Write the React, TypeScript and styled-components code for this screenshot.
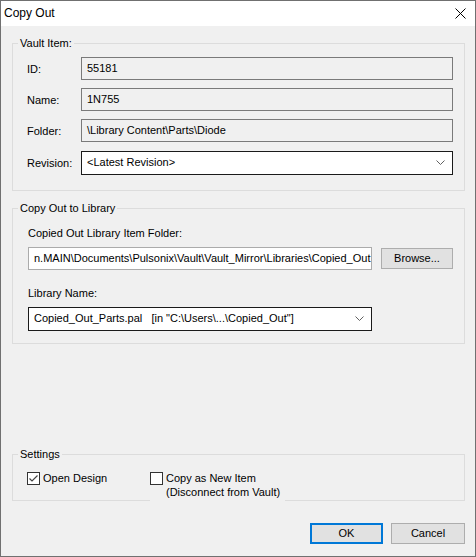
import { Fragment } from 'react';
import styled, { createGlobalStyle } from 'styled-components';

const GlobalStyle = createGlobalStyle`
  html, body {
    margin: 0;
    padding: 0;
    background: #ffffff;
  }
  * {
    box-sizing: border-box;
  }
`;

const font = `'Liberation Sans', Arial, sans-serif`;

const Window = styled.div`
  width: 476px;
  height: 557px;
  border: 1px solid #707070;
  background: #f0f0f0;
  display: flex;
  flex-direction: column;
  font-family: ${font};
  font-size: 11px;
  color: #000;
`;

const TitleBar = styled.div`
  height: 25px;
  flex-shrink: 0;
  background: #ffffff;
  display: flex;
  align-items: center;
  justify-content: space-between;
  padding: 0 9px 1px 3px;
  font-size: 12px;
`;

const Body = styled.div`
  flex: 1;
  display: flex;
  flex-direction: column;
  padding: 9px 10px 12px 11px;
`;

const Group = styled.fieldset<{ $gap?: number }>`
  margin: 0;
  margin-top: ${({ $gap }) => $gap ?? 0}px;
  padding: 0;
  min-width: 0;
  border: 1px solid #dcdcdc;
`;

const Legend = styled.legend`
  margin-left: 5px;
  padding: 0 2px;
  line-height: 16px;
  font-size: 11px;
`;

const FieldGrid = styled.div`
  display: grid;
  grid-template-columns: 54px 1fr;
  row-gap: 8px;
  align-items: center;
  padding: 6px 11px 15px 14px;
`;

const Label = styled.span`
  line-height: 15px;
  padding-top: 1px;
`;

const ReadOnly = styled.div`
  height: 23px;
  border: 1px solid #7a7a7a;
  background: #f0f0f0;
  padding: 0 5px;
  line-height: 20px;
  white-space: nowrap;
  overflow: hidden;
`;

const Combo = styled.div<{ $width?: number; $top?: number }>`
  height: 24px;
  width: ${({ $width }) => ($width ? `${$width}px` : 'auto')};
  margin-top: ${({ $top }) => $top ?? 0}px;
  border: 1px solid #1a1a1a;
  background: #ffffff;
  display: flex;
  align-items: center;
  justify-content: space-between;
  padding: 0 7px 2px 5px;
  white-space: pre;
`;

const LibraryBody = styled.div`
  display: flex;
  flex-direction: column;
  padding: 10px 11px 12px 15px;
`;

const LibLabel = styled.div<{ $top?: number }>`
  line-height: 15px;
  margin-top: ${({ $top }) => $top ?? 0}px;
  margin-bottom: 6px;
`;

const PathRow = styled.div`
  display: flex;
  align-items: center;
  gap: 9px;
`;

const EditBox = styled.div`
  width: 344px;
  height: 23px;
  border: 1px solid #ababab;
  background: #ffffff;
  padding: 0 5px;
  line-height: 20px;
  white-space: nowrap;
  overflow: hidden;
`;

const Button = styled.button<{ $width: number; $default?: boolean }>`
  width: ${({ $width }) => $width}px;
  height: 21px;
  padding: 0 0 1px;
  font-family: ${font};
  font-size: 11px;
  color: #000;
  background: #e1e1e1;
  border: ${({ $default }) => ($default ? '2px solid #0078d7' : '1px solid #adadad')};
  border-radius: 0;
`;

const Spacer = styled.div`
  flex: 1;
`;

const CheckGrid = styled.div`
  display: grid;
  grid-template-columns: 123px 135px;
  padding: 9px 0 1px 14px;
`;

const CheckItem = styled.label<{ $cover?: boolean }>`
  display: flex;
  align-items: flex-start;
  gap: 3px;
  line-height: 14px;
  background: ${({ $cover }) => ($cover ? '#f0f0f0' : 'transparent')};
  padding-bottom: ${({ $cover }) => ($cover ? 3 : 0)}px;
  margin-bottom: ${({ $cover }) => ($cover ? -3 : 0)}px;
`;

const Box = styled.span`
  flex-shrink: 0;
  width: 13px;
  height: 13px;
  margin-top: 1px;
  border: 1px solid #333333;
  background: #ffffff;
  display: flex;
`;

const ButtonRow = styled.div`
  display: flex;
  justify-content: flex-end;
  gap: 8px;
  margin-top: 22px;
`;

const Chevron = () => (
  <svg width="9" height="5" viewBox="0 0 9 5">
    <path d="M0.5 0.5 L4.5 4.5 L8.5 0.5" fill="none" stroke="#606060" strokeWidth="1" />
  </svg>
);

const CloseIcon = () => (
  <svg width="11" height="11" viewBox="0 0 11 11">
    <path d="M0.5 0.5 L10.5 10.5 M10.5 0.5 L0.5 10.5" stroke="#000" strokeWidth="1" />
  </svg>
);

const CheckMark = () => (
  <svg width="11" height="11" viewBox="0 0 11 11">
    <path d="M1.5 5.5 L4 8 L9.5 2.5" fill="none" stroke="#444" strokeWidth="1.2" />
  </svg>
);

const App = () => {
  const vaultFields = [
    { label: 'ID:', value: '55181' },
    { label: 'Name:', value: '1N755' },
    { label: 'Folder:', value: '\\Library Content\\Parts\\Diode' },
  ];

  return (
    <>
      <GlobalStyle />
      <Window>
        <TitleBar>
          <span>Copy Out</span>
          <CloseIcon />
        </TitleBar>
        <Body>
          <Group>
            <Legend>Vault Item:</Legend>
            <FieldGrid>
              {vaultFields.map((f) => (
                <Fragment key={f.label}>
                  <Label>{f.label}</Label>
                  <ReadOnly>{f.value}</ReadOnly>
                </Fragment>
              ))}
              <Label>Revision:</Label>
              <Combo $top={1}>
                <span>{'<Latest Revision>'}</span>
                <Chevron />
              </Combo>
            </FieldGrid>
          </Group>

          <Group $gap={9}>
            <Legend>Copy Out to Library</Legend>
            <LibraryBody>
              <LibLabel>Copied Out Library Item Folder:</LibLabel>
              <PathRow>
                <EditBox>n.MAIN\Documents\Pulsonix\Vault\Vault_Mirror\Libraries\Copied_Out</EditBox>
                <Button $width={72}>Browse...</Button>
              </PathRow>
              <LibLabel $top={16}>Library Name:</LibLabel>
              <Combo $width={344}>
                <span>{'Copied_Out_Parts.pal   [in "C:\\Users\\...\\Copied_Out"]'}</span>
                <Chevron />
              </Combo>
            </LibraryBody>
          </Group>

          <Spacer />

          <Group>
            <Legend>Settings</Legend>
            <CheckGrid>
              <CheckItem>
                <Box>
                  <CheckMark />
                </Box>
                <span>Open Design</span>
              </CheckItem>
              <CheckItem $cover>
                <Box />
                <span>
                  Copy as New Item
                  <br />
                  (Disconnect from Vault)
                </span>
              </CheckItem>
            </CheckGrid>
          </Group>

          <ButtonRow>
            <Button $width={73} $default>
              OK
            </Button>
            <Button $width={74}>Cancel</Button>
          </ButtonRow>
        </Body>
      </Window>
    </>
  );
};

export default App;
